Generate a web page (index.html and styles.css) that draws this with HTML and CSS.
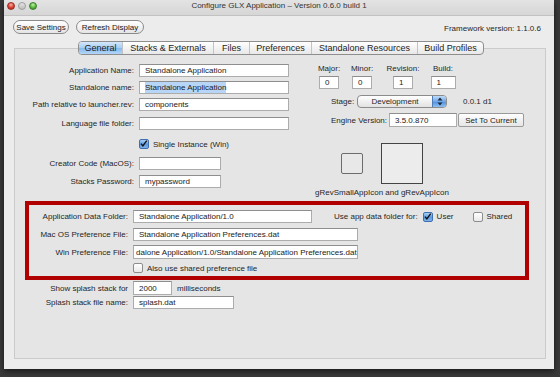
FILE: index.html
```html
<!DOCTYPE html>
<html lang="en">
<head>
    <meta charset="UTF-8">
    <title>Configure GLX Application</title>
    <link rel="stylesheet" href="styles.css">
</head>
<body>
    <div class="window">
        <div class="titlebar">
            <div class="lights">
                <span class="light red"></span>
                <span class="light grey"></span>
                <span class="light green"></span>
            </div>
            <div class="title">Configure GLX Application – Version 0.6.0 build 1</div>
            <div></div>
        </div>

        <div class="toolbar">
            <button class="pill w56">Save Settings</button>
            <button class="pill w68">Refresh Display</button>
            <span class="framework">Framework version: 1.1.0.6</span>
        </div>

        <div class="tabs">
            <div class="tabbar">
                <span class="tab active t43">General</span>
                <span class="tab t91">Stacks &amp; Externals</span>
                <span class="tab t36">Files</span>
                <span class="tab t62">Preferences</span>
                <span class="tab t106">Standalone Resources</span>
                <span class="tab t66">Build Profiles</span>
            </div>
        </div>

        <div class="panel">
            <div class="top">
                <!-- left column: names, paths -->
                <div class="left-col">
                    <div class="row">
                        <span class="lbl">Application Name:</span>
                        <div class="field w150">Standalone Application</div>
                    </div>
                    <div class="row">
                        <span class="lbl">Standalone name:</span>
                        <div class="field w150"><span class="sel">Standalone Application</span></div>
                    </div>
                    <div class="row">
                        <span class="lbl">Path relative to launcher.rev:</span>
                        <div class="field w150">components</div>
                    </div>
                    <div class="row mt2">
                        <span class="lbl">Language file folder:</span>
                        <div class="field w150"></div>
                    </div>
                    <div class="row mt5 ml124">
                        <span class="cb on"><svg width="10" height="10" viewBox="0 0 10 10"><path d="M2.2 4.6 L4.3 7.2 L8.6 1.2" fill="none" stroke="#111" stroke-width="1.5"/></svg></span>
                        <span class="cb-text">Single Instance (Win)</span>
                    </div>
                    <div class="row mt4">
                        <span class="lbl">Creator Code (MacOS):</span>
                        <div class="field w82"></div>
                    </div>
                    <div class="row mt1">
                        <span class="lbl">Stacks Password:</span>
                        <div class="field w82">mypassword</div>
                    </div>
                </div>

                <!-- right column: version, stage, icons -->
                <div class="right-col">
                    <div class="versions">
                        <div class="vcol c24"><span class="vlbl">Major:</span><div class="field w20">0</div></div>
                        <div class="vcol c24 ml9"><span class="vlbl">Minor:</span><div class="field w20">0</div></div>
                        <div class="vcol c34 ml12"><span class="vlbl">Revision:</span><div class="field w20">1</div></div>
                        <div class="vcol c26 ml10"><span class="vlbl">Build:</span><div class="field w25">1</div></div>
                    </div>
                    <div class="row stage-row">
                        <span class="rl w26">Stage:</span>
                        <div class="popup">
                            <span class="popup-text">Development</span>
                            <span class="stepper"><svg width="6" height="9" viewBox="0 0 6 9"><path d="M3 0.5 L5.5 3.5 L0.5 3.5 Z M3 8.5 L5.5 5.5 L0.5 5.5 Z" fill="#1c2a44"/></svg></span>
                        </div>
                        <span class="stage-ver">0.0.1 d1</span>
                    </div>
                    <div class="row engine-row">
                        <span class="rl w58">Engine Version:</span>
                        <div class="field w68 h14">3.5.0.870</div>
                        <button class="btn">Set To Current</button>
                    </div>
                    <div class="icons">
                        <div class="icon-pair">
                            <div class="icon-small"></div>
                            <div class="icon-large"></div>
                        </div>
                        <span class="icon-caption">gRevSmallAppIcon and gRevAppIcon</span>
                    </div>
                </div>
            </div>

            <div class="redbox">
                <div class="row">
                    <span class="rlbl">Application Data Folder:</span>
                    <div class="field w179">Standalone Application/1.0</div>
                    <span class="use-for">Use app data folder for:</span>
                    <span class="cb on ml5"><svg width="10" height="10" viewBox="0 0 10 10"><path d="M2.2 4.6 L4.3 7.2 L8.6 1.2" fill="none" stroke="#111" stroke-width="1.5"/></svg></span>
                    <span class="cb-text">User</span>
                    <span class="cb ml19"></span>
                    <span class="cb-text ml3">Shared</span>
                </div>
                <div class="row mt5">
                    <span class="rlbl">Mac OS Preference File:</span>
                    <div class="field w225">Standalone Application Preferences.dat</div>
                </div>
                <div class="row mt4">
                    <span class="rlbl">Win Preference File:</span>
                    <div class="field w225 h14 scrolled">dalone Application/1.0/Standalone Application Preferences.dat</div>
                </div>
                <div class="row mt4 ml104">
                    <span class="cb"></span>
                    <span class="cb-text ml3">Also use shared preference file</span>
                </div>
            </div>

            <div class="splash">
                <div class="row">
                    <span class="rlbl">Show splash stack for</span>
                    <div class="field w39 h14">2000</div>
                    <span class="ms">milliseconds</span>
                </div>
                <div class="row mt1">
                    <span class="rlbl">Splash stack file name:</span>
                    <div class="field w101">splash.dat</div>
                </div>
            </div>
        </div>
    </div>
</body>
</html>
```

FILE: styles.css
```css
html, body {
    margin: 0;
    height: 377px;
    overflow: hidden;
}
body {
    background: #3a3a3a;
    font-family: "Liberation Sans", Arial, sans-serif;
    font-size: 8px;
    color: #262626;
}

.window {
    margin-left: 4px;
    width: 550px;
    height: 369px;
    background: #ececec;
    display: flex;
    flex-direction: column;
    box-shadow: 0 2px 6px rgba(0, 0, 0, 0.6);
}

/* title bar */
.titlebar {
    height: 15px;
    display: grid;
    grid-template-columns: 1fr auto 1fr;
    background: linear-gradient(#e3e3e3, #d6d6d6);
    border-bottom: 1px solid #c2c2c2;
}
.lights {
    display: flex;
    gap: 3px;
    padding: 2px 0 0 3px;
}
.light {
    width: 8px;
    height: 8px;
    border-radius: 50%;
    box-sizing: border-box;
}
.red {
    background: radial-gradient(circle at 50% 30%, #f7b0a4, #dc4032 55%, #a62418);
    border: 1px solid #9a2a20;
}
.grey {
    background: linear-gradient(#e4e4e4, #bdbdbd);
    border: 1px solid #9d9d9d;
}
.green {
    background: radial-gradient(circle at 50% 30%, #c2f0a8, #55b83b 55%, #2f7d20);
    border: 1px solid #3b7d2b;
}
.title {
    line-height: 12px;
    color: #333;
}

/* toolbar */
.toolbar {
    height: 25px;
    box-sizing: border-box;
    display: flex;
    align-items: flex-start;
    gap: 7px;
    padding: 4px 13px 0 9px;
}
.pill {
    height: 14px;
    padding: 0;
    border: 1px solid #8a8a8a;
    border-radius: 7px;
    background: linear-gradient(#ffffff, #f2f2f2 50%, #e4e4e4);
    font-family: inherit;
    font-size: 8px;
    color: #222;
}
.w56 { width: 56px; }
.w68 { width: 68px; }
.framework {
    margin-left: auto;
    margin-top: 4px;
    line-height: 10px;
}

/* tabs */
.tabs {
    display: flex;
    justify-content: center;
    padding-left: 4px;
    margin-bottom: -7px;
    position: relative;
    z-index: 1;
}
.tabbar {
    display: flex;
    height: 14px;
    box-sizing: border-box;
    border: 1px solid #8e8e8e;
    border-radius: 4px;
    overflow: hidden;
    background: linear-gradient(#ffffff, #f3f3f3 50%, #e8e8e8);
}
.tab {
    box-sizing: border-box;
    font-size: 9px;
    line-height: 12px;
    text-align: center;
    color: #1e1e1e;
    border-left: 1px solid #c3c3c3;
}
.tab:first-child { border-left: none; }
.tab.active {
    background: linear-gradient(#d4e8fb, #a6ccf3 50%, #86b9ee 52%, #b3d6f8);
}
.t43 { width: 43px; }
.t91 { width: 91px; }
.t36 { width: 36px; }
.t62 { width: 62px; }
.t106 { width: 106px; }
.t66 { width: 66px; }

/* panel */
.panel {
    flex: 1;
    margin: 0 8px 10px 10px;
    border: 1px solid #cbcbcb;
    background: #e5e5e5;
}
.top {
    display: flex;
    align-items: flex-start;
}
.left-col {
    width: 274px;
    padding-top: 15px;
    display: flex;
    flex-direction: column;
    gap: 4px;
}
.row {
    display: flex;
    align-items: center;
}
.lbl {
    width: 119px;
    margin-right: 5px;
    text-align: right;
    white-space: nowrap;
}
.field {
    height: 13px;
    box-sizing: border-box;
    border: 1px solid #acacac;
    border-top-color: #8e8e8e;
    background: #fff;
    padding-left: 5px;
    display: flex;
    align-items: center;
    white-space: nowrap;
    overflow: hidden;
    color: #1a1a1a;
}
.h14 { height: 14px; }
.sel {
    background: #b7d5f6;
    padding: 1px 0;
}
.scrolled {
    padding-left: 2px;
}

.w20 { width: 20px; }
.w25 { width: 25px; }
.w39 { width: 39px; }
.w68 { width: 68px; }
.w82 { width: 82px; }
.w101 { width: 101px; }
.w150 { width: 150px; }
.w179 { width: 179px; }
.w225 { width: 225px; }

.mt1 { margin-top: 1px; }
.mt2 { margin-top: 2px; }
.mt4 { margin-top: 4px; }
.mt5 { margin-top: 5px; }
.ml3 { margin-left: 3px; }
.ml5 { margin-left: 5px; }
.ml9 { margin-left: 9px; }
.ml10 { margin-left: 10px; }
.ml12 { margin-left: 12px; }
.ml19 { margin-left: 19px; }
.ml104 { margin-left: 104px; }
.ml124 { margin-left: 124px; }

/* checkboxes */
.cb {
    width: 10px;
    height: 10px;
    box-sizing: border-box;
    border: 1px solid #8d8d8d;
    border-radius: 2px;
    background: linear-gradient(#ffffff, #e9e9e9);
    display: inline-flex;
    flex-shrink: 0;
}
.cb.on {
    border-color: #3f6fb0;
    background: linear-gradient(#a9cdf3, #5d9be0 55%, #7eb2ec);
}
.cb svg {
    margin: -1px 0 0 -1px;
}
.cb-text {
    margin-left: 4px;
    white-space: nowrap;
}

/* right column */
.right-col {
    padding-top: 15px;
    display: flex;
    flex-direction: column;
}
.versions {
    display: flex;
    margin-left: 28px;
}
.vcol {
    display: flex;
    flex-direction: column;
    align-items: center;
    gap: 2px;
}
.c24 { width: 24px; }
.c26 { width: 26px; }
.c34 { width: 34px; }
.vlbl { line-height: 10px; }

.rl { white-space: nowrap; }
.w26 { width: 26px; }
.w58 { width: 58px; }
.stage-row {
    margin: 6px 0 0 42px;
}
.popup {
    width: 90px;
    height: 13px;
    box-sizing: border-box;
    border: 1px solid #8c8c8c;
    border-radius: 4px;
    background: linear-gradient(#ffffff, #f0f0f0 50%, #e2e2e2);
    display: flex;
    overflow: hidden;
}
.popup-text {
    flex: 1;
    text-align: center;
    line-height: 11px;
}
.stepper {
    width: 13px;
    background: linear-gradient(#c0dbf7, #6fa7e6 50%, #4f8fdc 52%, #8fc0f1);
    border-left: 1px solid #4d7bb8;
    display: flex;
    align-items: center;
    justify-content: center;
}
.stage-ver {
    margin-left: 16px;
}
.engine-row {
    margin: 5px 0 0 42px;
}
.btn {
    width: 66px;
    height: 14px;
    margin-left: 1px;
    padding: 0;
    border: 1px solid #9a9a9a;
    border-radius: 2px;
    background: linear-gradient(#ffffff, #f1f1f1 50%, #e6e6e6);
    font-family: inherit;
    font-size: 8px;
    color: #222;
}
.icons {
    margin: 16px 0 0 29px;
    width: 128px;
    display: flex;
    flex-direction: column;
    align-items: center;
}
.icon-pair {
    display: flex;
    align-items: center;
    gap: 18px;
}
.icon-small {
    width: 22px;
    height: 21px;
    box-sizing: border-box;
    border: 1px solid #6c6c6c;
    border-radius: 2px;
    background: #e8e8e8;
}
.icon-large {
    width: 42px;
    height: 41px;
    box-sizing: border-box;
    border: 1px solid #444;
    background: #ececec;
}
.icon-caption {
    margin-top: 4px;
    line-height: 10px;
    white-space: nowrap;
}

/* highlighted preferences block */
.redbox {
    margin: 3px 0 0 10px;
    width: 504px;
    height: 79px;
    box-sizing: border-box;
    border: 4px solid #b10000;
    padding-top: 5px;
}
.rlbl {
    width: 99px;
    margin-right: 5px;
    text-align: right;
    white-space: nowrap;
}
.use-for {
    margin-left: 22px;
    white-space: nowrap;
}

.splash {
    margin-top: 1px;
    padding-left: 14px;
}
.ms {
    margin-left: 5px;
}
```
